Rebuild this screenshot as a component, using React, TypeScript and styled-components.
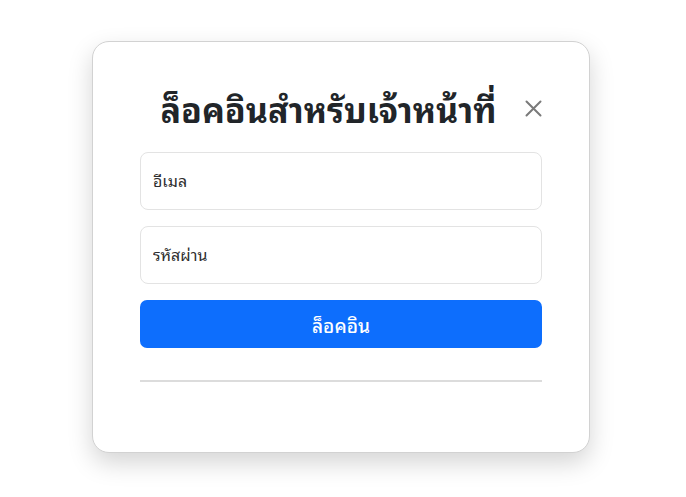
import React from "react";
import styled, { createGlobalStyle } from "styled-components";

const GlobalStyle = createGlobalStyle`
  html, body {
    margin: 0;
    padding: 0;
    background: #ffffff;
  }
  body {
    font-family: "Noto Sans Thai Looped", "Noto Sans", sans-serif;
    color: #212529;
  }
  * {
    box-sizing: border-box;
  }
`;

const Page = styled.div`
  min-height: 100vh;
  padding-top: 41px;
  padding-left: 92px;
`;

const Card = styled.div`
  width: 498px;
  height: 412px;
  background: #fff;
  border: 1px solid #d2d2d2;
  border-radius: 17px;
  box-shadow: 0 10px 24px rgba(0, 0, 0, 0.17);
  padding: 46px 47px 0 47px;
  display: flex;
  flex-direction: column;
`;

const Header = styled.div`
  display: flex;
  align-items: center;
  height: 40px;
  margin-bottom: 24px;
`;

const Title = styled.h2`
  flex: 1;
  margin: 0;
  text-align: center;
  font-size: 34px;
  font-weight: 700;
  line-height: 40px;
  color: #212529;
`;

const CloseButton = styled.button`
  width: 17px;
  height: 17px;
  margin-left: 8px;
  padding: 0;
  border: none;
  background: transparent;
  cursor: pointer;
  display: flex;
  align-items: center;
  justify-content: center;
  color: #7a7a7a;
`;

const Form = styled.form`
  display: flex;
  flex-direction: column;
`;

const Input = styled.input<{ $gap: number }>`
  height: 58px;
  width: 100%;
  padding: 0 12px 2px;
  margin-bottom: ${({ $gap }) => $gap}px;
  border: 1px solid #e3e3e3;
  border-radius: 8px;
  font-family: inherit;
  font-size: 16px;
  color: #212529;
  outline: none;

  &::placeholder {
    color: #2e2e2e;
  }
`;

const SubmitButton = styled.button`
  height: 48px;
  width: 100%;
  border: none;
  border-radius: 7px;
  background: #0d6efd;
  color: #fff;
  font-family: inherit;
  font-size: 19px;
  font-weight: 500;
  cursor: pointer;
`;

const Divider = styled.hr`
  margin: 32px 0 0 0;
  border: none;
  border-top: 2px solid #dcdcdc;
`;

export default function App() {
  return (
    <>
      <GlobalStyle />
      <Page>
        <Card>
          <Header>
            <Title>ล็อคอินสำหรับเจ้าหน้าที่</Title>
            <CloseButton type="button" aria-label="close">
              <svg width="17" height="17" viewBox="0 0 17 17">
                <path
                  d="M1.5 1.5 L15.5 15.5 M15.5 1.5 L1.5 15.5"
                  stroke="currentColor"
                  strokeWidth="2"
                  strokeLinecap="round"
                />
              </svg>
            </CloseButton>
          </Header>
          <Form onSubmit={(e) => e.preventDefault()}>
            <Input $gap={16} type="email" placeholder="อีเมล" />
            <Input $gap={16} type="password" placeholder="รหัสผ่าน" />
            <SubmitButton type="submit">ล็อคอิน</SubmitButton>
          </Form>
          <Divider />
        </Card>
      </Page>
    </>
  );
}
